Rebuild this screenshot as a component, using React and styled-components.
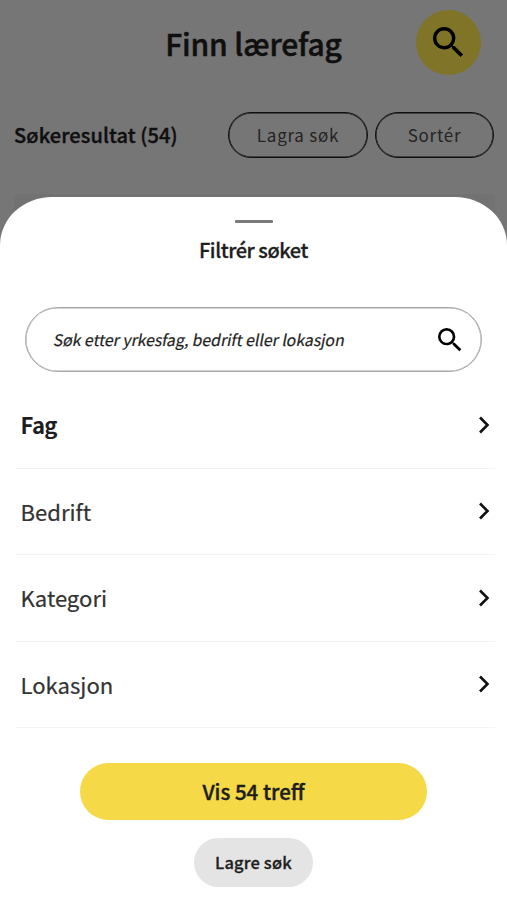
import React from 'react';
import styled, { createGlobalStyle, ThemeProvider } from 'styled-components';

const theme = {
  colors: {
    primary: '#f5d947',
    text: '#1e1e1e',
    muted: '#333333',
    border: '#a8a8a8',
    divider: '#f3f3f3',
    secondary: '#e4e4e4',
  },
};

const GlobalStyle = createGlobalStyle`
  * {
    box-sizing: border-box;
  }
  body {
    margin: 0;
    background: #ececec;
    color: ${theme.colors.text};
    font-family: 'Noto Sans CJK SC', 'Open Sans', sans-serif;
    overflow: hidden;
  }
  button {
    font-family: inherit;
    color: inherit;
    padding: 0;
    border: none;
    background: none;
  }
`;

const Page = styled.div`
  position: relative;
  width: 507px;
  height: 900px;
  overflow: hidden;
`;

const Header = styled.header`
  display: grid;
  grid-template-columns: 1fr auto 1fr;
  align-items: center;
  height: 85px;
  padding: 0 26.5px;
`;

const PageTitle = styled.h1`
  grid-column: 2;
  margin: 0;
  font-size: 30px;
  line-height: 44px;
  font-weight: 500;
  letter-spacing: -0.15px;
  -webkit-text-stroke: 0.5px;
`;

const RoundButton = styled.button`
  justify-self: end;
  display: flex;
  align-items: center;
  justify-content: center;
  width: 65px;
  height: 65px;
  padding-bottom: 1px;
  border-radius: 50%;
  background: #ffe84e;
`;

const Toolbar = styled.div`
  display: flex;
  align-items: center;
  gap: 7px;
  margin-top: 27px;
  padding: 0 13px 0 14px;
`;

const ResultCount = styled.h2`
  flex: 1;
  margin: 0;
  font-size: 20px;
  line-height: 30px;
  font-weight: 500;
  letter-spacing: 0.1px;
  -webkit-text-stroke: 0.4px;
`;

const OutlineButton = styled.button`
  width: ${(props) => props.$width}px;
  height: 46px;
  padding-bottom: 1px;
  border: 1px solid ${(props) => props.theme.colors.text};
  border-radius: 23px;
  box-shadow: inset 0 0 0 0.5px ${(props) => props.theme.colors.text};
  font-size: 17px;
  letter-spacing: 0.75px;
  color: #484848;
`;

const ResultCard = styled.div`
  height: 300px;
  margin: 36px 12px 0 14px;
  border-radius: 4px;
  background: #e4e4e4;
`;

const Overlay = styled.div`
  position: absolute;
  inset: 0;
  background: rgba(0, 0, 0, 0.5);
`;

const Sheet = styled.section`
  position: absolute;
  left: 0;
  right: 0;
  bottom: 0;
  height: 703px;
  display: flex;
  flex-direction: column;
  align-items: center;
  border-radius: 52px 52px 0 0 / 48px 48px 0 0;
  background: #fff;
`;

const Handle = styled.div`
  width: 38px;
  height: 3px;
  margin-top: 23px;
  border-radius: 1px;
  background: #7b7b7b;
`;

const SheetTitle = styled.h3`
  margin: 12px 0 0;
  font-size: 20px;
  line-height: 30px;
  font-weight: 500;
  letter-spacing: -0.45px;
  -webkit-text-stroke: 0.3px;
`;

const SearchField = styled.label`
  display: flex;
  align-items: center;
  justify-content: space-between;
  width: 457px;
  height: 65px;
  margin-top: 42px;
  padding: 0 19px 0 28px;
  border: 1px solid ${(props) => props.theme.colors.border};
  border-radius: 33px;
  box-shadow: inset 0 0 0 0.5px ${(props) => props.theme.colors.border};
`;

const Placeholder = styled.span`
  font-size: 15.8px;
  line-height: 24px;
  transform: skewX(-11deg);
  -webkit-text-stroke: 0.2px;
`;

const FilterList = styled.ul`
  width: 480px;
  margin: 10px 0 0 3px;
  padding: 0;
  list-style: none;
`;

const FilterRow = styled.li`
  display: flex;
  align-items: center;
  justify-content: space-between;
  height: 86.5px;
  padding: 0 5px 0 5.5px;
  border-bottom: 1.5px solid ${(props) => props.theme.colors.divider};
  color: ${(props) => (props.$active ? props.theme.colors.text : props.theme.colors.muted)};
`;

const FilterLabel = styled.span`
  margin-bottom: 1px;
  font-size: 22.1px;
  font-weight: ${(props) => (props.$active ? 700 : 400)};
  letter-spacing: ${(props) => (props.$active ? '-0.6px' : 'normal')};
  -webkit-text-stroke: ${(props) => (props.$active ? '0' : '0.2px')};
`;

const SubmitButton = styled.button`
  width: 347px;
  height: 57px;
  margin-top: 34.5px;
  padding-bottom: 1px;
  border-radius: 29px;
  background: ${(props) => props.theme.colors.primary};
  font-size: 20.5px;
  font-weight: 500;
  -webkit-text-stroke: 0.4px;
`;

const SaveButton = styled.button`
  width: 119px;
  height: 49px;
  margin-top: 18.5px;
  padding-bottom: 1px;
  border-radius: 25px;
  background: ${(props) => props.theme.colors.secondary};
  font-size: 16.5px;
  font-weight: 500;
  letter-spacing: 0.15px;
  -webkit-text-stroke: 0.3px;
`;

const SearchIcon = ({ size }) => (
  <svg width={size} height={size} viewBox="3 3 18 18" fill="#000">
    <path d="M15.5 14h-.79l-.28-.27A6.471 6.471 0 0 0 16 9.5 6.5 6.5 0 1 0 9.5 16c1.61 0 3.09-.59 4.23-1.57l.27.28v.79l5 4.99L20.49 19l-4.99-5zm-6 0C7.01 14 5 11.99 5 9.5S7.01 5 9.5 5 14 7.01 14 9.5 11.99 14 9.5 14z" />
  </svg>
);

const ChevronIcon = () => (
  <svg width="12" height="18" viewBox="0 0 12 18" fill="none" stroke="#111" strokeWidth="2.6">
    <path d="M2 1.5 9.5 9 2 16.5" />
  </svg>
);

const filters = ['Fag', 'Bedrift', 'Kategori', 'Lokasjon'];

const App = () => {
  return (
    <ThemeProvider theme={theme}>
      <GlobalStyle />
      <Page>
        <Header>
          <PageTitle>Finn lærefag</PageTitle>
          <RoundButton aria-label="Søk">
            <SearchIcon size={31} />
          </RoundButton>
        </Header>
        <Toolbar>
          <ResultCount>Søkeresultat (54)</ResultCount>
          <OutlineButton $width={140}>Lagra søk</OutlineButton>
          <OutlineButton $width={119}>Sortér</OutlineButton>
        </Toolbar>
        <ResultCard />
        <Overlay />
        <Sheet>
          <Handle />
          <SheetTitle>Filtrér søket</SheetTitle>
          <SearchField>
            <Placeholder>Søk etter yrkesfag, bedrift eller lokasjon</Placeholder>
            <SearchIcon size={24} />
          </SearchField>
          <FilterList>
            {filters.map((filter, index) => (
              <FilterRow key={filter} $active={index === 0}>
                <FilterLabel $active={index === 0}>{filter}</FilterLabel>
                <ChevronIcon />
              </FilterRow>
            ))}
          </FilterList>
          <SubmitButton>Vis 54 treff</SubmitButton>
          <SaveButton>Lagre søk</SaveButton>
        </Sheet>
      </Page>
    </ThemeProvider>
  );
};

export default App;
